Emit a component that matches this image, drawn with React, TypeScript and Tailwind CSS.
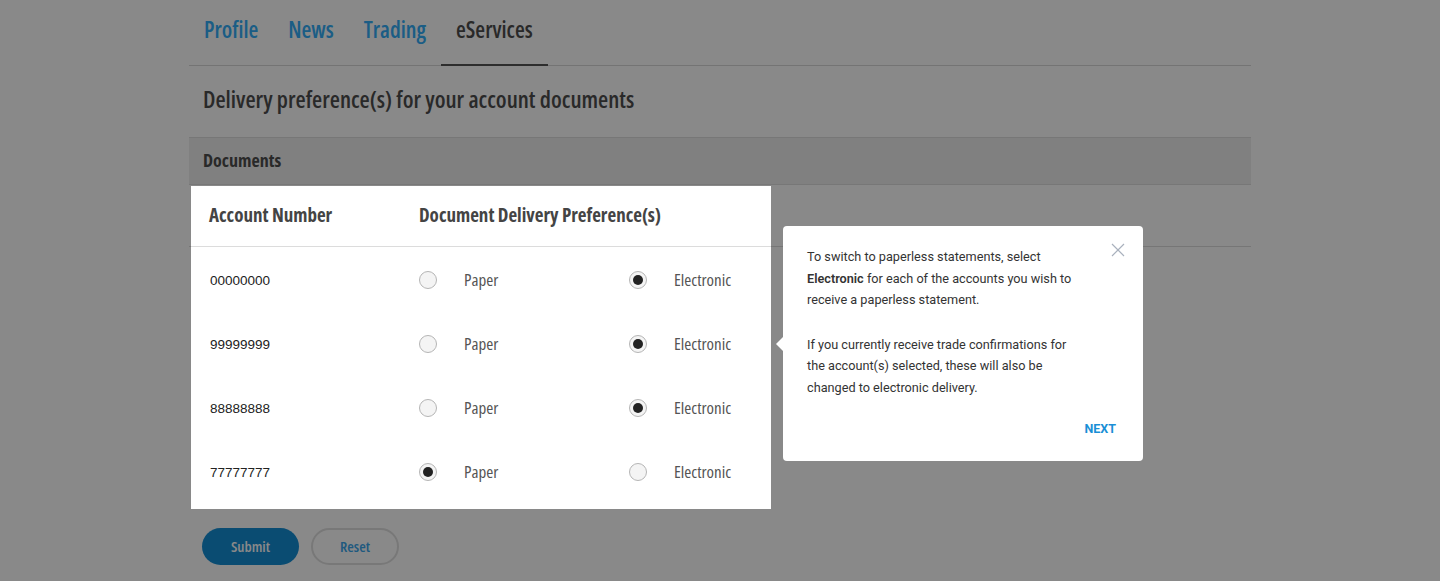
import { useState } from "react";

const tabs = ["Profile", "News", "Trading", "eServices"];

const accounts = [
  { id: "00000000", pref: "electronic" },
  { id: "99999999", pref: "electronic" },
  { id: "88888888", pref: "electronic" },
  { id: "77777777", pref: "paper" },
];

const cond = "font-['Open_Sans',sans-serif] font-stretch-condensed";

function Radio({ checked, label, onClick }: { checked: boolean; label: string; onClick: () => void }) {
  return (
    <button onClick={onClick} className="flex items-center gap-[27px]">
      <span className="relative -top-[1px] w-[18px] h-[18px] rounded-full border border-[#b5b5b5] bg-[#f4f4f4] flex items-center justify-center">
        {checked && <span className="w-[10px] h-[10px] rounded-full bg-[#222]" />}
      </span>
      <span className={`${cond} text-[17px] text-[#555] -mt-[1px]`}>{label}</span>
    </button>
  );
}

export default function App() {
  const [prefs, setPrefs] = useState(accounts.map((a) => a.pref));

  return (
    <div className="min-h-[581px] bg-white text-[#444]">
      <div className="w-[1062px] mx-auto">
        <nav className={`flex border-b border-[#d9d9d9] ${cond}`}>
          {tabs.map((t) => (
            <a
              key={t}
              className={`px-[15px] h-[66px] flex items-center pb-[5px] text-[22.5px] font-semibold border-b-2 -mb-px ${
                t === "eServices" ? "text-[#4d4d4d] border-[#555]" : "text-[#33adf8] border-transparent"
              }`}
            >
              {t}
            </a>
          ))}
        </nav>

        <h1 className={`${cond} px-[14px] h-[71px] pb-[4px] flex items-center text-[23.3px] font-semibold text-[#4d4d4d]`}>
          Delivery preference(s) for your account documents
        </h1>

        <div className={`${cond} h-[48px] px-[14px] pb-[2px] flex items-center bg-[#efefef] border-y border-[#dedede] text-[18px] font-bold text-[#4d4d4d]`}>
          Documents
        </div>

        <div className="relative">
          <div className={`${cond} h-[62px] pb-[1px] flex items-center border-b border-[#dcdcdc] text-[19px] font-bold text-[#444]`}>
            <div className="w-[230px] pl-[20px]">Account Number</div>
            <div>Document Delivery Preference(s)</div>
          </div>

          {accounts.map((a, i) => (
            <div key={a.id} className="h-[64px] pt-[3px] flex items-center">
              <div className="w-[230px] pl-[21px] pt-[1px] font-['Liberation_Sans',sans-serif] text-[13.5px] text-[#222]">{a.id}</div>
              <div className="w-[210px]">
                <Radio
                  checked={prefs[i] === "paper"}
                  label="Paper"
                  onClick={() => setPrefs(prefs.map((p, j) => (j === i ? "paper" : p)))}
                />
              </div>
              <Radio
                checked={prefs[i] === "electronic"}
                label="Electronic"
                onClick={() => setPrefs(prefs.map((p, j) => (j === i ? "electronic" : p)))}
              />
            </div>
          ))}

          <div className="h-[6px]" />

          {/* tour spotlight */}
          <div className="pointer-events-none absolute left-[2px] top-[1px] w-[580px] h-[323px] z-10 shadow-[0_0_0_9999px_rgba(0,0,0,0.463)]" />

          {/* tour popover */}
          <div className="absolute z-20 left-[594px] top-[41px] w-[360px] h-[235px] bg-white rounded-[4px] pl-[24px] pr-[27px] pt-[20px] font-['Roboto',sans-serif] text-[12.7px] leading-[21.5px] text-[#333]">
            <span className="absolute -left-[7px] top-[111px] w-0 h-0 border-y-[7px] border-y-transparent border-r-[7px] border-r-white" />
            <button className="absolute right-[18px] top-[17px] text-[#a9b1bd]">
              <svg width="14" height="14" viewBox="0 0 14 14" fill="none" stroke="currentColor" strokeWidth="1.2">
                <path d="M1 1l12 12M13 1L1 13" />
              </svg>
            </button>
            <p className="w-[280px]">
              To switch to paperless statements, select <b className="font-semibold">Electronic</b> for each of the accounts you wish to receive a paperless statement.
            </p>
            <p className="w-[280px] mt-[23px]">
              If you currently receive trade confirmations for the account(s) selected, these will also be changed to electronic delivery.
            </p>
            <div className="flex justify-end mt-[20px]">
              <button className="font-bold text-[#1a8fd6] text-[12.5px]">NEXT</button>
            </div>
          </div>
        </div>

        <div className={`${cond} flex gap-[12px] px-[13px] mt-[19px]`}>
          <button className="w-[97px] h-[37px] rounded-full bg-[#138ed5] text-white text-[15px] font-semibold">Submit</button>
          <button className="w-[88px] h-[37px] rounded-full border-2 border-[#e0e0e0] text-[#3aa6ec] text-[15px] font-semibold">Reset</button>
        </div>
      </div>
    </div>
  );
}
